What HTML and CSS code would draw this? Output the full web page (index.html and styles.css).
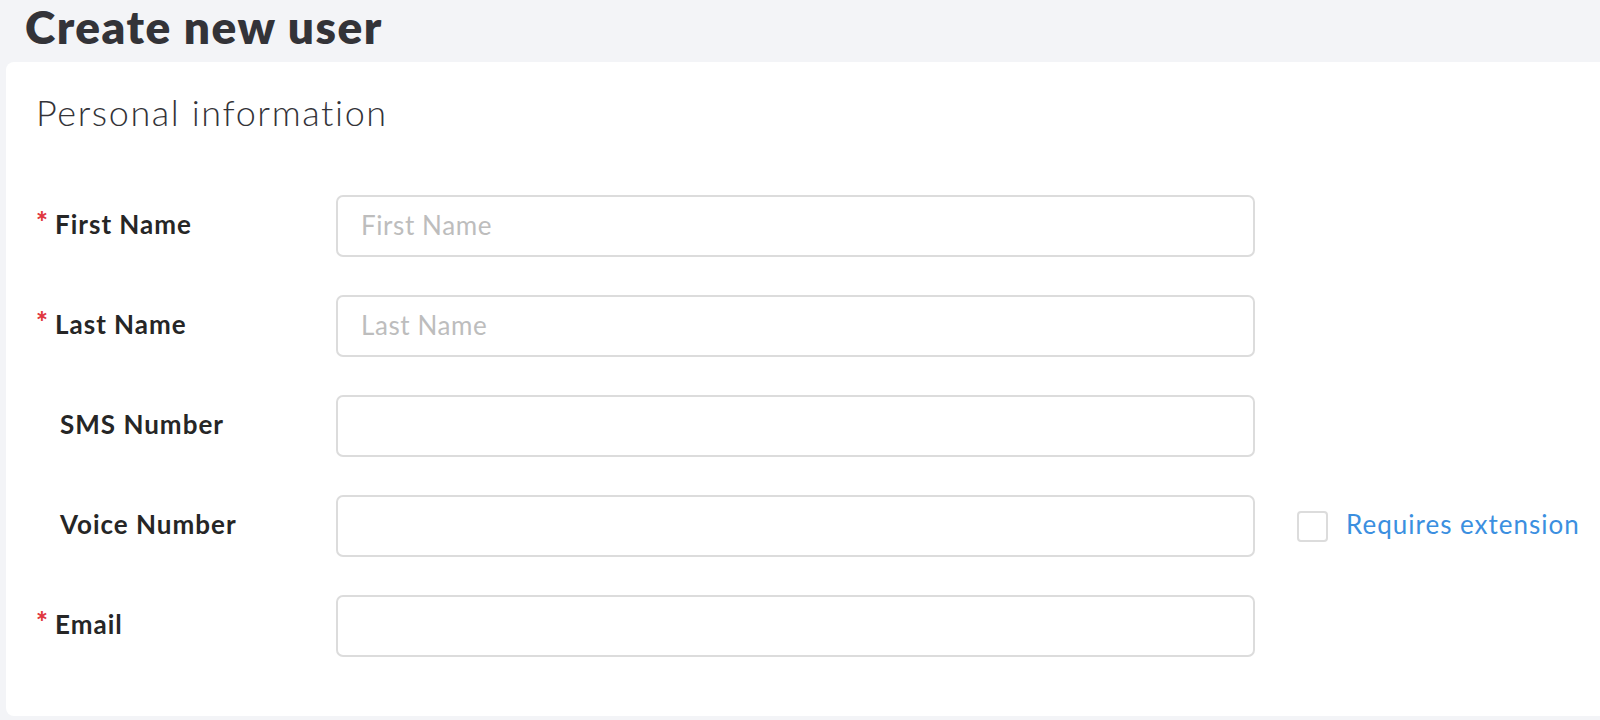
FILE: index.html
```html
<!DOCTYPE html>
<html lang="en">
<head>
<meta charset="utf-8">
<title>Create new user</title>
<link rel="stylesheet" href="styles.css">
</head>
<body>
<div class="page">
  <header class="page-header">
    <h1 class="page-title">Create new user</h1>
  </header>
  <main class="card">
    <h2 class="section-title">Personal information</h2>
    <form class="form">
      <div class="row">
        <label class="label required" for="first">First Name</label>
        <input class="input" id="first" type="text" placeholder="First Name">
      </div>
      <div class="row">
        <label class="label required" for="last">Last Name</label>
        <input class="input" id="last" type="text" placeholder="Last Name">
      </div>
      <div class="row">
        <label class="label" for="sms">SMS Number</label>
        <input class="input" id="sms" type="text">
      </div>
      <div class="row">
        <label class="label" for="voice">Voice Number</label>
        <input class="input" id="voice" type="text">
        <label class="check">
          <span class="checkbox"></span>
          <span class="check-text">Requires extension</span>
        </label>
      </div>
      <div class="row">
        <label class="label required" for="email">Email</label>
        <input class="input" id="email" type="text">
      </div>
    </form>
  </main>
</div>
</body>
</html>
```

FILE: styles.css
```css
* { box-sizing: border-box; }
html, body {
  margin: 0;
  padding: 0;
  background: #f3f4f7;
  font-family: "Lato", "Liberation Sans", sans-serif;
  font-variant-ligatures: none;
  overflow: hidden;
}
.page {
  padding-left: 6px;
  height: 720px;
  display: flex;
  flex-direction: column;
}
.page-header {
  height: 62px;
  padding-left: 19px;
}
.page-title {
  margin: 0;
  font-size: 46px;
  line-height: 54px;
  font-weight: 800;
  color: #333338;
  letter-spacing: 1.5px;
}
.card {
  background: #ffffff;
  border-radius: 8px 0 0 8px;
  height: 654px;
  padding: 28px 0 0 30px;
}
.section-title {
  margin: 0;
  font-size: 36px;
  line-height: 44px;
  font-weight: 300;
  color: #333338;
  letter-spacing: 1.6px;
}
.form {
  margin-top: 61px;
  display: flex;
  flex-direction: column;
  gap: 38px;
}
.row {
  display: flex;
  align-items: center;
  height: 62px;
}
.label {
  width: 300px;
  flex: none;
  padding-left: 24px;
  padding-bottom: 5px;
  font-size: 26px;
  font-weight: 700;
  color: #262626;
  letter-spacing: 1px;
  position: relative;
}
.label.required {
  padding-left: 19px;
}
.label.required::before {
  content: "*";
  position: absolute;
  left: 0;
  top: -4px;
  color: #e0393e;
  font-size: 28px;
  font-weight: 900;
  letter-spacing: 0;
}
.input {
  width: 919px;
  height: 62px;
  border: 2px solid #dcdcdc;
  border-radius: 7px;
  padding: 0 23px 2px;
  font-family: inherit;
  font-size: 26px;
  letter-spacing: 0.6px;
  color: #333;
  background: #fff;
  outline: none;
}
.input::placeholder {
  color: #bdbdbd;
}
.check {
  display: flex;
  align-items: center;
  margin-left: 42px;
  gap: 18px;
}
.checkbox {
  width: 31px;
  height: 31px;
  border: 2px solid #dcdcdc;
  border-radius: 4px;
  background: #fff;
}
.check-text {
  font-size: 26px;
  letter-spacing: 1px;
  color: #3b8fe0;
  padding-bottom: 4px;
}
```
